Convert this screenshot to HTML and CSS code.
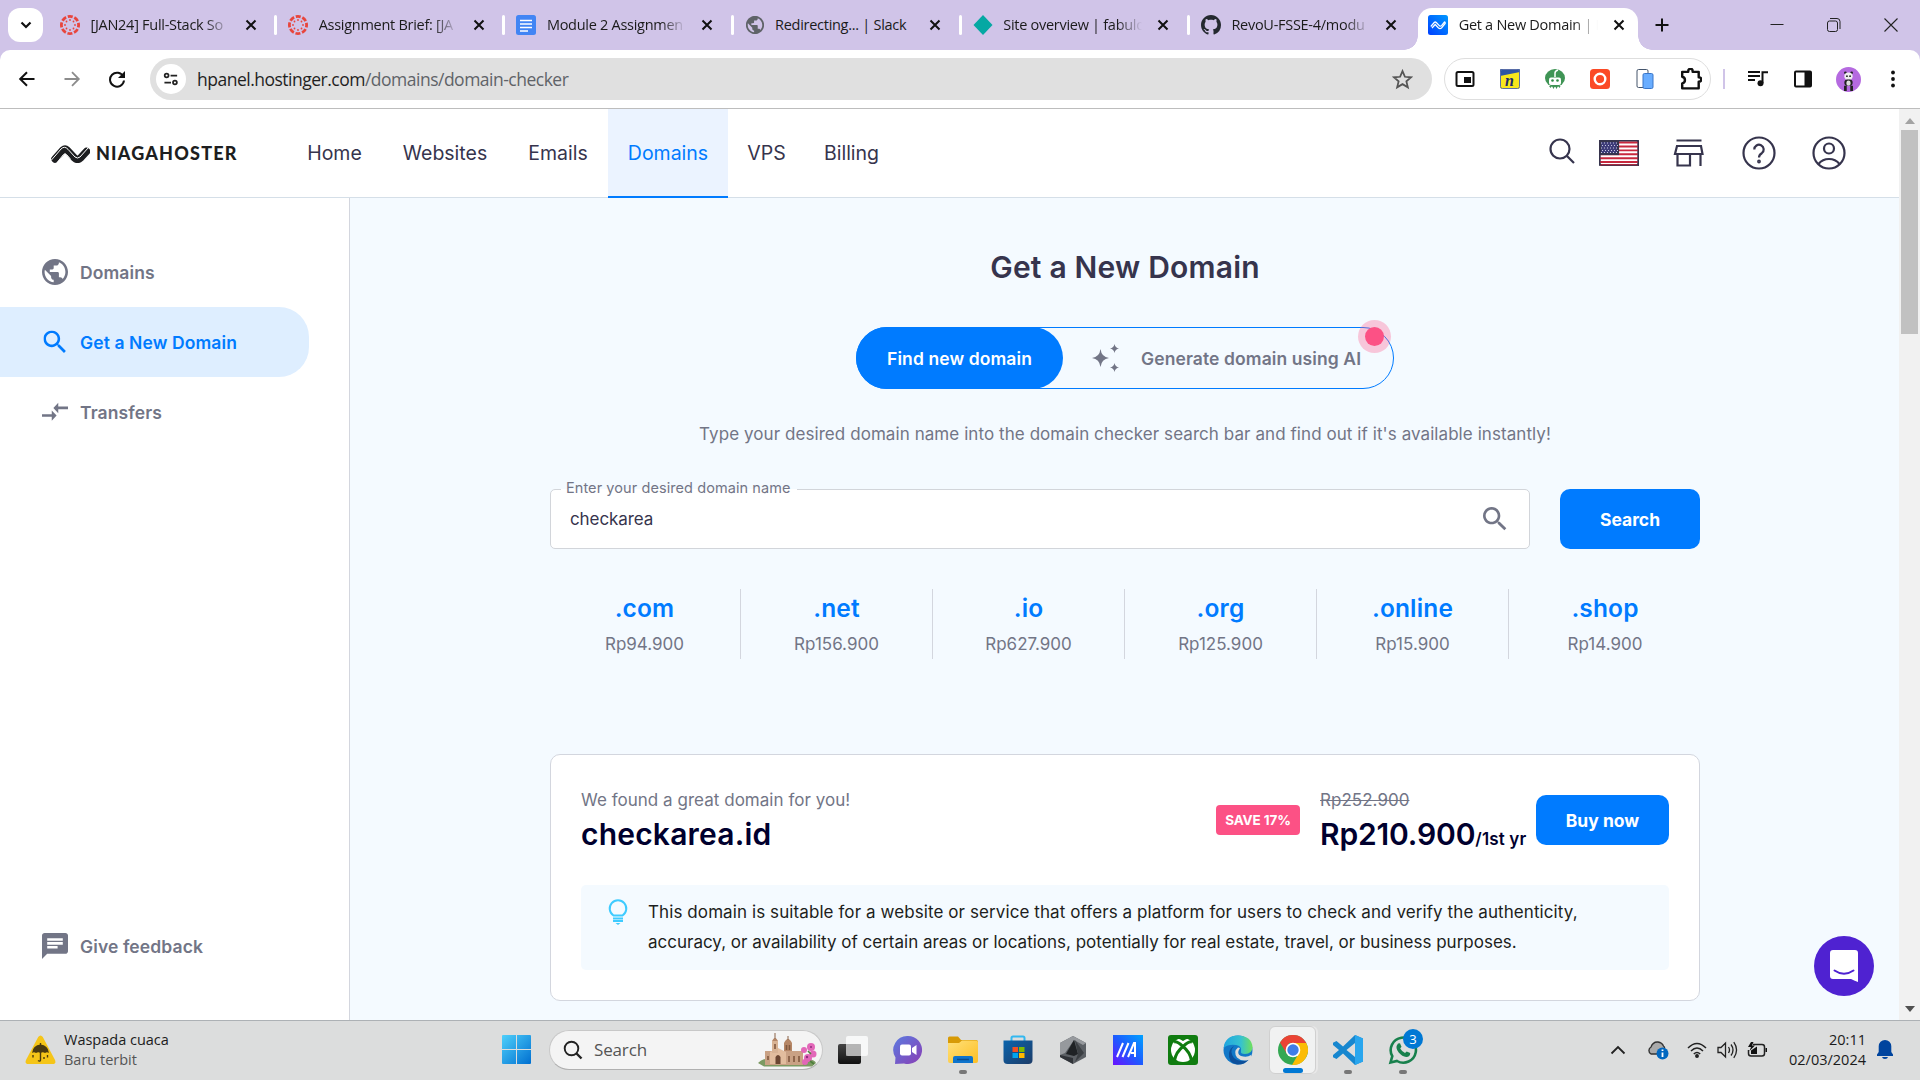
FILE: index.html
```html
<!DOCTYPE html>
<html lang="en">
<head>
<meta charset="utf-8">
<title>Get a New Domain | Niagahoster</title>
<link rel="stylesheet" href="styles.css">
</head>
<body>
<svg class="defs" width="0" height="0">
  <defs>
    <symbol id="close" viewBox="0 0 12 12"><path d="M1.5 1.5l9 9M10.5 1.5l-9 9" stroke="#111" stroke-width="2" fill="none"/></symbol>
    <symbol id="canvas" viewBox="0 0 20 20">
      <circle cx="10" cy="10" r="8.6" fill="none" stroke="#e8453c" stroke-width="2.8" stroke-dasharray="5 1.75" stroke-dashoffset="2.5"/>
      <g fill="#e8453c"><circle cx="10" cy="5" r=".9"/><circle cx="10" cy="15" r=".9"/><circle cx="5" cy="10" r=".9"/><circle cx="15" cy="10" r=".9"/><circle cx="6.5" cy="6.5" r=".9"/><circle cx="13.500" cy="6.5" r=".9"/><circle cx="6.500" cy="13.500" r=".9"/><circle cx="13.500" cy="13.500" r=".9"/></g>
    </symbol>
    <symbol id="globe" viewBox="2 2 20 20"><path d="M12 2C6.480 2 2 6.480 2 12s4.480 10 10 10 10-4.480 10-10S17.520 2 12 2zm-1 17.930c-3.950-.49-7-3.850-7-7.930 0-.62.080-1.210.210-1.790L9 15v1c0 1.100.9 2 2 2v1.930zm6.900-2.540c-.26-.81-1-1.390-1.900-1.390h-1v-3c0-.55-.45-1-1-1H8v-2h2c.55 0 1-.45 1-1V7h2c1.100 0 2-.9 2-2v-.41c2.930 1.190 5 4.060 5 7.410 0 2.080-.8 3.970-2.100 5.390z"/></symbol>
    <symbol id="search" viewBox="3 3 18 18"><path d="M15.500 14h-.79l-.28-.27C15.410 12.590 16 11.110 16 9.500 16 5.910 13.090 3 9.500 3S3 5.910 3 9.500 5.910 16 9.500 16c1.610 0 3.090-.59 4.230-1.570l.27.28v.79l5 4.990L20.490 19l-4.990-5zm-6 0C7.010 14 5 11.990 5 9.500S7.010 5 9.500 5 14 7.010 14 9.500 11.990 14 9.500 14z"/></symbol>
    <linearGradient id="winGrad" x1="0" y1="0" x2="1" y2="1"><stop offset="0" stop-color="#4fd0fb"/><stop offset="1" stop-color="#006fd0"/></linearGradient>
    <linearGradient id="favGrad" x1="1" y1="0" x2="0" y2="1"><stop offset="0" stop-color="#0099ff"/><stop offset="1" stop-color="#003fff"/></linearGradient>
    <linearGradient id="chatGrad" x1="0" y1="0" x2="1" y2="1"><stop offset="0" stop-color="#5b7be0"/><stop offset="1" stop-color="#8a3fb5"/></linearGradient>
    <linearGradient id="folderGrad" x1="0" y1="0" x2="1" y2="1"><stop offset="0" stop-color="#ffe07a"/><stop offset="1" stop-color="#fdbf24"/></linearGradient>
    <linearGradient id="storeGrad" x1="0" y1="0" x2="1" y2="1"><stop offset="0" stop-color="#0a64ad"/><stop offset="1" stop-color="#1d3c68"/></linearGradient>
    <linearGradient id="asusGrad" x1="1" y1="0" x2="0" y2="1"><stop offset="0" stop-color="#00a2ff"/><stop offset=".5" stop-color="#1d5bff"/><stop offset="1" stop-color="#6a11ff"/></linearGradient>
    <linearGradient id="edgeGrad" x1="0" y1="0" x2="1" y2="0"><stop offset="0" stop-color="#1fa5e0"/><stop offset=".6" stop-color="#36c2cf"/><stop offset="1" stop-color="#6fe05a"/></linearGradient>
    <linearGradient id="tvGrad" x1="0" y1="0" x2="0" y2="1"><stop offset="0" stop-color="#444"/><stop offset="1" stop-color="#111"/></linearGradient>
  </defs>
</svg>

<div class="screen">
  <header class="tabstrip">
    <button class="tab-search"><svg width="12" height="8" viewBox="0 0 12 8"><path d="M1.500 1.500L6 6l4.500-4.500" fill="none" stroke="#111" stroke-width="2.200"/></svg></button>
    <div class="tab"><svg class="fav"><use href="#canvas"/></svg><span class="tab-title fade">[JAN24] Full-Stack So</span><svg class="x"><use href="#close"/></svg></div>
    <div class="tab"><svg class="fav"><use href="#canvas"/></svg><span class="tab-title fade">Assignment Brief: [JA</span><svg class="x"><use href="#close"/></svg></div>
    <div class="tab"><svg class="fav" viewBox="0 0 20 20"><rect width="20" height="20" rx="2.500" fill="#4285f4"/><path d="M4 5.500h12M4 9h12M4 12.500h12M4 16h8" stroke="#fff" stroke-width="1.700"/></svg><span class="tab-title fade">Module 2 Assignmen</span><svg class="x"><use href="#close"/></svg></div>
    <div class="tab"><svg class="fav" fill="#5f6368" viewBox="-1 -1 22 22"><use href="#globe" width="20" height="20"/></svg><span class="tab-title">Redirecting... | Slack</span><svg class="x"><use href="#close"/></svg></div>
    <div class="tab"><svg class="fav" viewBox="0 0 20 20"><path d="M10 0l9.500 10-9.500 10L.5 10z" fill="#05a8a3"/></svg><span class="tab-title fade">Site overview | fabulo</span><svg class="x"><use href="#close"/></svg></div>
    <div class="tab nosep"><svg class="fav" viewBox="0 0 16 16"><path fill="#24292f" d="M8 0C3.580 0 0 3.580 0 8c0 3.540 2.290 6.530 5.470 7.590.4.070.55-.17.55-.38 0-.19-.01-.82-.01-1.490-2.010.37-2.530-.49-2.690-.94-.09-.23-.48-.94-.82-1.130-.28-.15-.68-.52-.01-.53.63-.01 1.080.58 1.230.82.72 1.210 1.870.87 2.330.66.070-.52.280-.87.510-1.070-1.780-.2-3.640-.89-3.640-3.950 0-.87.310-1.590.820-2.150-.08-.2-.36-1.020.080-2.120 0 0 .67-.21 2.200.820.640-.18 1.320-.27 2-.27s1.360.090 2 .270c1.530-1.040 2.200-.820 2.200-.820.440 1.100.160 1.920.080 2.120.510.560.820 1.270.820 2.150 0 3.070-1.870 3.750-3.650 3.950.290.250.540.730.540 1.480 0 1.070-.010 1.930-.010 2.200 0 .210.150.460.550.380A8.010 8.010 0 0 0 16 8c0-4.420-3.580-8-8-8z"/></svg><span class="tab-title fade">RevoU-FSSE-4/modu</span><svg class="x"><use href="#close"/></svg></div>
    <div class="tab active"><svg class="fav" viewBox="0 0 20 20"><rect width="20" height="20" rx="2.500" fill="url(#favGrad)"/><path d="M2.800 11.500l3.400-4q1-1 2.100 0l3.200 3.300q1 .8 2-.2l3-3.600M4 13l3.200-3.500L10.500 13q1.500 1.200 3 0l3.700-4.500q.2-1.800-1.200-1.700" fill="none" stroke="#fff" stroke-width="1.200"/></svg><span class="tab-title fade">Get a New Domain | I</span><svg class="x"><use href="#close"/></svg></div>
    <button class="new-tab"><svg width="14" height="14" viewBox="0 0 14 14"><path d="M7 .5v13M.5 7h13" stroke="#111" stroke-width="2"/></svg></button>
    <div class="winctl">
      <svg viewBox="0 0 16 16"><path d="M1.500 7.500h13" stroke="#222"/></svg>
      <svg viewBox="0 0 16 16" fill="none" stroke="#222"><rect x="1.500" y="4" width="10" height="10.500" rx="2"/><path d="M4 1.500h7a3 3 0 0 1 3 3V12"/></svg>
      <svg viewBox="0 0 16 16"><path d="M1.500 1.500l13 13M14.500 1.500l-13 13" stroke="#222" stroke-width="1.100"/></svg>
    </div>
  </header>

  <div class="toolbar">
    <div class="navbtns">
      <svg viewBox="0 0 18 18"><path d="M16.500 9H2.500M9 2.200L2.200 9 9 15.800" fill="none" stroke="#111" stroke-width="2"/></svg>
      <svg viewBox="0 0 18 18"><path d="M1.500 9h14M9 2.200L15.800 9 9 15.800" fill="none" stroke="#8c8c8c" stroke-width="1.800"/></svg>
      <svg viewBox="0 0 18 18"><path d="M15.300 6.500A7 7 0 1 0 16 10.500" fill="none" stroke="#111" stroke-width="2"/><path d="M17 1v7h-7z" fill="#111"/></svg>
    </div>
    <div class="omnibox">
      <span class="siteinfo"><svg width="16" height="14" viewBox="0 0 18 16" fill="none" stroke="#222" stroke-width="2"><circle cx="4" cy="4" r="2.200"/><path d="M8.500 4H16M1.500 12H9"/><circle cx="13.500" cy="12" r="2.200"/></svg></span>
      <span class="url">hpanel.hostinger.com<i>/domains/domain-checker</i></span>
      <svg class="star" viewBox="0 0 20 20"><path d="M10 2l2.300 5.400 5.900.5-4.500 3.900 1.400 5.700L10 14.400l-5.100 3.100 1.400-5.700L1.800 7.900l5.900-.5z" fill="none" stroke="#555" stroke-width="1.700"/></svg>
    </div>
    <div class="exts">
      <svg viewBox="0 0 20 20"><rect x="1.500" y="3" width="17" height="14" rx="1.500" fill="none" stroke="#111" stroke-width="2"/><rect x="9" y="8" width="7" height="6" fill="#111"/></svg>
      <svg viewBox="0 0 20 20"><rect width="20" height="20" rx="2" fill="#f8e71c"/><path d="M0 1q0-1 1-1h18q1 0 1 1v2L0 7z" fill="#2f55a4"/><rect x=".5" y=".5" width="19" height="19" rx="2" fill="none" stroke="#5a6ea8"/><text x="5" y="16.500" class="n-glyph">n</text></svg>
      <svg viewBox="0 0 20 20"><ellipse cx="10" cy="9" rx="10" ry="9" fill="#3f9455"/><path d="M4 17l1.500 2L7 17l1.500 3 1.500-3 1.500 3 1.500-3 1.500 2 1-2" fill="#3f9455"/><rect x="4" y="8.500" width="12" height="7.500" rx="2" fill="#fff"/><path d="M10 8V4q0-2 3-3" stroke="#fff" stroke-width="1.500" fill="none"/><circle cx="7.500" cy="11.500" r="1.300" fill="#2e8b45"/><circle cx="12.500" cy="11.500" r="1.300" fill="#2e8b45"/></svg>
      <svg viewBox="0 0 20 20"><rect width="20" height="20" rx="3.500" fill="#fb4a26"/><circle cx="10" cy="10" r="5.300" fill="none" stroke="#fff" stroke-width="2.400"/></svg>
      <svg viewBox="0 0 20 20"><rect x="2" y=".5" width="11" height="18" rx="1.500" fill="#fff" stroke="#44546b"/><rect x="8" y="4.500" width="10" height="15" rx="1.500" fill="#69adff" stroke="#3a76c9"/></svg>
      <svg class="puzzle" viewBox="0 0 20 20"><path d="M2 3.500h5.500v-.8a2 2 0 0 1 4 0v.8H17v5h.3a2 2 0 0 1 0 4H17V18.500H2V14q2.500-.5 2.500-3T2 8z" fill="none" stroke="#111" stroke-width="2.200" stroke-linejoin="round"/></svg>
    </div>
    <span class="tb-sep"></span>
    <div class="tbright">
      <svg viewBox="0 0 20 20"><path d="M0 3h12M0 7h12M0 11h7" stroke="#111" stroke-width="2"/><path d="M14.500 14V3.200H20" fill="none" stroke="#111" stroke-width="2"/><circle cx="12.500" cy="14.300" r="3" fill="#111"/></svg>
      <svg viewBox="0 0 20 20"><rect x="2" y="2.500" width="16" height="15" rx="1" fill="none" stroke="#111" stroke-width="2"/><path d="M11.500 2.500H18v15h-6.500z" fill="#111"/></svg>
      <svg class="avatar" viewBox="0 0 24 24"><circle cx="12" cy="12" r="12" fill="#b56ae0"/><circle cx="9" cy="5.500" r="1.300" fill="#222"/><circle cx="15" cy="5.500" r="1.300" fill="#222"/><ellipse cx="12" cy="8.800" rx="4" ry="3.500" fill="#eee"/><rect x="8" y="12" width="8" height="6" rx="3" fill="#222"/><rect x="10" y="13" width="4" height="5" rx="2" fill="#ddd"/><path d="M9 18v5M15 18v5" stroke="#222" stroke-width="2.600"/><circle cx="10.500" cy="8.800" r=".9" fill="#222"/><circle cx="13.500" cy="8.800" r=".9" fill="#222"/></svg>
      <svg viewBox="0 0 20 20" fill="#111"><circle cx="10" cy="3.500" r="1.900"/><circle cx="10" cy="10" r="1.900"/><circle cx="10" cy="16.500" r="1.900"/></svg>
    </div>
  </div>

  <div class="viewport">
    <div class="page">
      <div class="site-header">
        <div class="logo">
          <svg width="40" height="19" viewBox="0 0 40 19" fill="none" stroke-linejoin="round" stroke-linecap="round"><path d="M5 15L13 6q2-1.800 4 0l7.500 8q3 2.600 6 0L36.500 7.500" stroke="#1d1e20" stroke-width="7.500"/><path d="M1 16.500l4-4.500L11 5q3.500-3.500 7 .3L25 13q2.500 2 5 0L38.500 3.500M7.500 18l6-7.500q1.500-1.500 3 0l3.500 4M21 3.500l5 5.500 4-4.500" stroke="#fff" stroke-width="1"/></svg>
          <b>NIAGAHOSTER</b>
        </div>
        <nav class="mainnav">
          <a>Home</a><a>Websites</a><a>Emails</a><a class="on">Domains</a><a>VPS</a><a>Billing</a>
        </nav>
        <div class="head-icons">
          <svg class="hi-search" viewBox="0 0 26 26"><circle cx="11" cy="11" r="9.500"/><path d="M18 18l7 7"/></svg>
          <svg class="hi-flag" viewBox="0 0 40 26"><rect x=".5" y=".5" width="39" height="25" rx="2" fill="#fff"/><path d="M1 2.500h38M1 6.500h38M1 10.400h38M1 14.300h38M1 18.200h38M1 22h38M1 25h38" stroke="#c8283e" stroke-width="1.900"/><rect x="1" y="1" width="18" height="13" fill="#3f3d7a"/><path d="M2 3h17M3 5.500h17M2 8h17M3 10.500h17M2 12.500h17" stroke="#c9c9e0" stroke-width="1" stroke-dasharray="1 2"/><rect x=".75" y=".75" width="38.500" height="24.500" rx="2" stroke-width="1.200"/></svg>
          <svg class="hi-store" viewBox="0 0 30 28"><path d="M3 1.500h25M3.500 7h24l1.500 8H1.500zM4 15v11.500h12.500V15M27 15v12"/></svg>
          <svg class="hi-round" viewBox="0 0 34 34"><circle cx="17" cy="17" r="15.500"/><path d="M12.300 13.500a4.700 4.700 0 1 1 7.500 3.700q-2.800 1.800-2.800 4.300"/><circle cx="17" cy="25.500" r=".8"/></svg>
          <svg class="hi-round" viewBox="0 0 34 34"><circle cx="17" cy="17" r="15.500"/><circle cx="17" cy="12.500" r="5"/><path d="M6.500 28q4-5 10.500-5t10.500 5"/></svg>
        </div>
      </div>

      <div class="body-row">
        <aside class="sidebar">
          <a><svg fill="#727586"><use href="#globe"/></svg>Domains</a>
          <a class="on"><svg fill="#007bff" viewBox="-1.500 -1.500 27 27"><use href="#search" width="24" height="24"/></svg>Get a New Domain</a>
          <a><svg viewBox="0 0 24 24" fill="#727586"><path d="M9.010 14H0v2.400h9.010V20L13.500 15.200 9.010 10.500zM15 13.200V9.400h9V7H15V3.500L10.500 8.200z"/></svg>Transfers</a>
          <a class="feedback"><svg viewBox="2 2 20 20" fill="#727586"><path d="M20 2H4c-1.100 0-1.990.9-1.990 2L2 22l4-4h14c1.100 0 2-.9 2-2V4c0-1.100-.9-2-2-2zM6 9h12v2H6V9zm8 5H6v-2h8v2zm4-6H6V6h12v2z"/></svg>Give feedback</a>
        </aside>

        <main class="content">
          <h1>Get a New Domain</h1>
          <div class="toggle">
            <span class="t-on"><em>Find new domain</em></span>
            <span class="t-off">
              <svg width="28" height="28" viewBox="0 0 28 28" fill="#727586"><path d="M8.500 5q1 8 8.500 9-7.500 1-8.500 9-1-8-8.500-9 7.500-1 8.500-9zM22.500 0q.7 3.800 4.500 4.500-3.800.7-4.500 4.500-.7-3.800-4.500-4.500 3.800-.7 4.500-4.500zM22.500 19q.7 3.800 4.500 4.500-3.800.7-4.500 4.500-.7-3.800-4.500-4.500 3.800-.7 4.500-4.500z"/></svg>
              <em>Generate domain using AI</em>
            </span>
            <i class="pulse"></i>
          </div>
          <p class="lead"><span>Type your desired domain name into the domain checker search bar and find out if it's available instantly!</span></p>

          <div class="search-row">
            <div class="field">
              <label>Enter your desired domain name</label>
              <span>checkarea</span>
              <svg width="24" height="24" fill="#727586"><use href="#search"/></svg>
            </div>
            <button class="btn btn-search">Search</button>
          </div>

          <div class="tlds">
            <div><b>.com</b><span>Rp94.900</span></div>
            <div><b>.net</b><span>Rp156.900</span></div>
            <div><b>.io</b><span>Rp627.900</span></div>
            <div><b>.org</b><span>Rp125.900</span></div>
            <div><b>.online</b><span>Rp15.900</span></div>
            <div><b>.shop</b><span>Rp14.900</span></div>
          </div>

          <section class="card">
            <div class="card-top">
              <div class="found"><span class="muted">We found a great domain for you!</span><strong>checkarea.id</strong></div>
              <span class="save">SAVE 17%</span>
              <div class="price"><s class="muted">Rp252.900</s><strong>Rp210.900<small>/1st yr</small></strong></div>
              <button class="btn btn-buy">Buy now</button>
            </div>
            <div class="tip">
              <svg width="20" height="26" viewBox="0 0 20 26"><path d="M5.500 16.500a8.300 8.300 0 1 1 9 0z" fill="none" stroke="#3ecbff" stroke-width="2"/><path d="M5 19.500h10M5 22h10" stroke="#3ecbff" stroke-width="2"/><path d="M7.500 24h5L10 26z" fill="#3ecbff"/></svg>
              <p><span class="wide">This domain is suitable for a website or service that offers a platform for users to check and verify the authenticity,</span><br><span>accuracy, or availability of certain areas or locations, potentially for real estate, travel, or business purposes.</span></p>
            </div>
          </section>
        </main>
      </div>
      <div class="chat"><svg width="28" height="32" viewBox="0 0 28 32"><path d="M3 0h22a3 3 0 0 1 3 3v29q-3-1-7-3H3a3 3 0 0 1-3-3V3a3 3 0 0 1 3-3z" fill="#fff"/><path d="M4.500 20.500q9.500 6.500 19 0" fill="none" stroke="#4f22d1" stroke-width="2" stroke-linecap="round"/></svg></div>
    </div>
    <div class="scrollbar">
      <svg width="10" height="6" viewBox="0 0 10 6"><path d="M5 0l5 6H0z" fill="#a3a3a3"/></svg>
      <i class="thumb"></i>
      <svg class="down" width="10" height="6" viewBox="0 0 10 6"><path d="M0 0h10L5 6z" fill="#505050"/></svg>
    </div>
  </div>

  <footer class="taskbar">
    <div class="weather">
      <svg width="31" height="30" viewBox="0 0 31 30"><path d="M13.200 2Q15.500-1 17.800 2L30 25q1.500 4-2.500 4h-24Q-.5 29 1 25z" fill="#f5c518"/><path d="M7 18q1-8 8.500-8.500Q23 10 24 18q-2-1.500-4 0-2.200-1.500-4.500 0-2.200-1.500-4.500 0-2-1.500-4 0z" fill="#4a3a10"/><path d="M15.500 8v17q-.5 2-2.500.500M8 20v2.500M22.500 20v2.500M19 22v2" fill="none" stroke="#4a3a10" stroke-width="1.400"/></svg>
      <div><span>Waspada cuaca</span><span class="w2">Baru terbit</span></div>
    </div>
    <div class="apps">
      <svg class="win" viewBox="0 0 29 29" fill="url(#winGrad)"><path d="M1 0h13v14H0V1q0-1 1-1zM15 0h13q1 0 1 1v13H15zM0 15h14v14H1q-1 0-1-1zM15 15h14v13q0 1-1 1H15z"/></svg>
      <div class="tsearch">
        <svg width="20" height="20" viewBox="0 0 20 20"><circle cx="8.500" cy="8.500" r="6.800" fill="none" stroke="#222" stroke-width="1.900"/><path d="M13.500 13.500l5 5" stroke="#222" stroke-width="2.400"/></svg>
        <span>Search</span>
        <svg class="church" width="60" height="34" viewBox="0 0 60 34"><path d="M0 30q6-6 12-3h34q10-2 12 3l-4 3.500H6z" fill="#7c9a63"/><rect x="7" y="18" width="38" height="14" fill="#c9a184"/><path d="M12 31V19l8-4 8 4v12z" fill="#e2bd9e"/><rect x="14" y="8" width="6" height="12" fill="#d8b394"/><path d="M14 8q3-6 6 0zM26 18v-8q4-8 8 0v8z" fill="#b58666"/><path d="M17 0v6M30 3v4" stroke="#8a6248"/><path d="M17.500 31v-7q2.500-4 5 0v7z" fill="#6b4632"/><path d="M17 11v5M28.500 12v5M31.500 12v5M10 23v4M31 23v6M36 23v6M41 23v6" stroke="#80583f" stroke-width="1.600"/><g fill="#e267b8"><circle cx="46" cy="17" r="3"/><circle cx="53" cy="14" r="4"/><circle cx="55" cy="21" r="3.500"/><circle cx="50" cy="25" r="4"/><circle cx="47" cy="29" r="3"/></g><g fill="#8b2f7c"><circle cx="53" cy="14" r="1"/><circle cx="49" cy="24" r="1.200"/></g><path d="M50 18l3 3M52 28l4 3" stroke="#4e7f3c" stroke-width="1.600"/></svg>
      </div>
      <div class="app"><svg viewBox="0 0 30 30"><rect x="0" y="9" width="23" height="20" rx="2" fill="url(#tvGrad)"/><rect x="8" y="1" width="22" height="20" rx="2" fill="#fff" opacity=".78"/><path d="M8 9h15v12H8z" fill="#a0a0a0" opacity=".6"/></svg></div>
      <div class="app"><svg viewBox="0 0 30 30"><path d="M15 1a14 14 0 1 1-4 27.400L2 29l.5-6.500A14 14 0 0 1 15 1z" fill="url(#chatGrad)"/><rect x="7" y="9.500" width="11" height="11" rx="2" fill="#fff"/><path d="M19 13l4.500-3v10L19 17z" fill="#fff"/></svg></div>
      <div class="app dot"><svg viewBox="0 0 30 30"><path d="M0 3q0-1.500 1.500-1.500H10L13 5h15q2 0 2 2v3H0z" fill="#d79a06"/><path d="M0 8h11l3-2.500h14q2 0 2 2V26q0 2-2 2H2q-2 0-2-2z" fill="url(#folderGrad)"/><path d="M5 28v-5q0-2 2-2h16q2 0 2 2v5z" fill="#0f74cc"/><path d="M9 24.500h12" stroke="#0a4d8f" stroke-width="1.500"/></svg></div>
      <div class="app"><svg viewBox="0 0 30 30"><path d="M8.500 6V3q0-1.500 1.500-1.500h10q1.500 0 1.500 1.500v3" fill="none" stroke="#32b8f0" stroke-width="2"/><path d="M.5 5.500h29V25q0 4-4 4h-21q-4 0-4-4z" fill="url(#storeGrad)"/><path d="M9.500 12H15v5H9.500z" fill="#f25022"/><path d="M16 12h5.500v5H16z" fill="#7fba00"/><path d="M9.500 18H15v5H9.500z" fill="#00a4ef"/><path d="M16 18h5.500v5H16z" fill="#ffb900"/></svg></div>
      <div class="app"><svg viewBox="0 0 30 30"><path d="M15 1l13 7v14l-13 7-13-7V8z" fill="#5c6065"/><path d="M15 1l13 7-3 2-9-5-9 13-5 2V8z" fill="#96999d"/><path d="M16 5L8 19l8 2 4-2z" fill="#1f2225"/><path d="M17 5l9 13-9 9 3-8z" fill="#3b3f43"/><path d="M2 20l13 3v6L2 22z" fill="#303338"/></svg></div>
      <div class="app"><svg viewBox="0 0 30 30"><rect width="30" height="30" fill="url(#asusGrad)"/><path d="M4 22L10 8M9.500 22l6-14M15 22l6-14h1v14M18 18h4" fill="none" stroke="#fff" stroke-width="2"/></svg></div>
      <div class="app"><svg viewBox="0 0 30 30"><rect width="30" height="30" rx="3" fill="#107c10"/><circle cx="15" cy="15" r="12" fill="#fff"/><path d="M6.500 25.500Q8 17 15 11.500 22 17 23.500 25.500M6 7q3-1 9 4.500Q21 6 24 7" fill="none" stroke="#107c10" stroke-width="3"/><path d="M9 3.500q3 0 6 2.500 3-2.500 6-2.500L15 1z" fill="#107c10"/></svg></div>
      <div class="app"><svg viewBox="0 0 30 30"><circle cx="15" cy="15" r="14.500" fill="#1278c8"/><path d="M.7 13Q2 .5 15 .5 29 1 29.500 12.500 29 19 22 19q-5 0-4-3 1-5-5-6Q5 9 .7 13z" fill="url(#edgeGrad)"/><path d="M11 11q-5 5 0 12 6 5.500 15 1-4 6-12 5.500Q5 28 6 18q1-5 5-7z" fill="#0c4f9b"/><path d="M17 13q-4 6 1 8 6 2 10-1l1 4-3.500 1q-7 2-11.500-2.500-4-6 1-10z" fill="#dcdcdc"/></svg></div>
      <div class="app chrome"><svg viewBox="0 0 30 30"><circle cx="15" cy="15" r="15" fill="#34a853"/><path d="M15 8h13.200A15 15 0 0 1 14 30l7-12z" fill="#fbbc05"/><path d="M2 7.500L9 19l2-11h17.300L28 7.500A15 15 0 0 0 2 7.500z" fill="#ea4335"/><circle cx="15" cy="15" r="7.300" fill="#fff"/><circle cx="15" cy="15" r="5.700" fill="#3f7de8"/></svg></div>
      <div class="app dot"><svg viewBox="0 0 30 30"><path d="M22 0l8 3.500v23L22 30 10 18.500 3.500 24 0 22.300V20l6-5-6-5V7.700L3.500 6 10 11.500zM22 8l-8.500 7 8.500 7z" fill="#1787cf"/><path d="M22 0l8 3.500v23L22 30z" fill="#29a6ee"/></svg></div>
      <div class="app dot"><svg viewBox="0 0 30 30"><path d="M2.500 27.500l1.800-6.300A12.600 12.600 0 1 1 9 26z" fill="none" stroke="#17804c" stroke-width="2.600"/><path d="M10 8.500l2-.3 1.500 3.500-1.300 1.800q1.700 3 4.800 4.500l1.700-1.600 3.500 1.600q0 4-4 4-4-.5-7.500-4.500-4-5-.7-9z" fill="#17804c"/></svg><i class="count">3</i></div>
    </div>
    <div class="tray">
      <svg width="16" height="10" viewBox="0 0 16 10"><path d="M1.500 8.500L8 2l6.500 6.500" fill="none" stroke="#222" stroke-width="1.800"/></svg>
      <svg class="t-cloud" width="22" height="20" viewBox="0 0 22 20"><path d="M4 14a4 4 0 0 1 0-7Q6 1.500 11 2q4 .5 5.500 4 1.500 1 1 3l-8 5z" fill="#aaa" stroke="#333" stroke-width="1.400"/><circle cx="15.500" cy="13.500" r="6" fill="#0067c0"/><path d="M15.500 12.500V17M15.500 9.500V11" stroke="#fff" stroke-width="1.800"/></svg>
      <svg class="t-wifi" width="20" height="16" viewBox="0 0 20 16" fill="none" stroke="#222" stroke-width="1.500"><path d="M1 6q9-9 18 0M4 9q6-6 12 0M6.800 12q3.200-3 6.400 0"/><circle cx="10" cy="14" r="1.200" fill="#222"/></svg>
      <svg class="t-vol" width="21" height="18" viewBox="0 0 21 18" fill="none" stroke="#222" stroke-width="1.300"><path d="M1 6.500h3L8.500 2v14L4 11.500H1zM11.500 6q2 3 0 6M14 3.500q4 5.500 0 11M16.800 1.200q5.500 7.800 0 15.600"/></svg>
      <svg class="t-bat" width="21" height="16" viewBox="0 0 21 16"><path d="M6 2.500h9q2.500 0 2.500 2.500v6.500q0 2.500-2.500 2.500H4q-2.500 0-2.500-2.500V8" fill="none" stroke="#222" stroke-width="1.500"/><path d="M4 12V8.500l6-4V12zM18.500 6H20v4h-1.500z" fill="#111"/><path d="M4 0L1 5h3L2.500 9 8 3.500H5L6.500 0z" fill="#111"/></svg>
      <div class="clock"><span>20:11</span><span>02/03/2024</span></div>
      <svg class="bell" width="16" height="19" viewBox="0 0 16 19" fill="#00449e"><path d="M8 0a6.300 6.300 0 0 1 6.300 6.300V12L16 14.500V16H0v-1.500L1.700 12V6.300A6.300 6.300 0 0 1 8 0zM5 17h6q-.5 2-3 2t-3-2z"/></svg>
    </div>
  </footer>
</div>
</body>
</html>
```
FILE: styles.css
```css
* { box-sizing: border-box; }
body { margin: 0; font-family: Inter, "Liberation Sans", sans-serif; overflow: hidden; }
button { border: 0; padding: 0; font: inherit; }
svg { flex: none; display: block; }
i, em { font-style: normal; }
.defs { position: absolute; }
.screen { width: 1920px; height: 1080px; display: flex; flex-direction: column; background: #d0c4e8; }

/* browser tabs */
.tabstrip { height: 50px; display: flex; align-items: center; padding-left: 8px; font-family: "Open Sans", "Noto Sans", sans-serif; }
.tab-search { width: 35px; height: 34px; border-radius: 12px; background: #fff; display: grid; place-items: center; margin-right: 4px; }
.tab { width: 228.2px; height: 42px; margin-top: 8px; padding: 0 0 8px 13px; display: flex; align-items: center; position: relative; }
.tab::after { content: ""; position: absolute; right: -2px; top: 7px; width: 3px; height: 20px; border-radius: 2px; background: #fff; }
.tab.nosep::after, .tab.active::after { display: none; }
.tab .fav { width: 20px; height: 20px; margin-right: 10.500px; }
.tab-title { width: 139px; height: 24px; line-height: 24px; white-space: nowrap; font-size: 14.500px; letter-spacing: -.28px; color: #1b1b1b; }
.fade { -webkit-mask-image: linear-gradient(90deg, #000 82%, transparent); mask-image: linear-gradient(90deg, #000 82%, transparent); }
.tab .x { width: 12px; height: 12px; margin-left: 15px; }
.tab.active { width: 220px; margin-left: 2px; background: #fff; border-radius: 14px 14px 0 0; padding-left: 10px; }
.tab.active::before { content: ""; position: absolute; left: -14px; right: -14px; bottom: 0; height: 14px;
  background: radial-gradient(circle at 0 0, transparent 13.500px, #fff 14px) left / 14px 14px no-repeat, radial-gradient(circle at 100% 0, transparent 13.500px, #fff 14px) right / 14px 14px no-repeat; }
.new-tab { width: 14px; height: 14px; background: none; margin-left: 17px; }
.winctl { margin-left: auto; margin-right: 21px; display: flex; gap: 41px; }
.winctl svg { width: 16px; height: 16px; }

/* browser toolbar */
.toolbar { height: 59px; background: #fff; border-bottom: 1px solid #bdbdbd; border-radius: 10px 10px 0 0; display: flex; align-items: center; }
.navbtns { width: 150px; padding-left: 18px; display: flex; gap: 27px; }
.navbtns svg { width: 18px; height: 18px; }
.omnibox { width: 1282px; height: 42px; border-radius: 21px; background: #e0e0e0; display: flex; align-items: center; padding: 0 19px 0 6px; }
.siteinfo { width: 30px; height: 30px; border-radius: 50%; background: #fff; display: grid; place-items: center; }
.url { margin-left: 11px; font: 17.500px "Open Sans", "Noto Sans", sans-serif; letter-spacing: -.5px; color: #1f1f1f; }
.url i { color: #5f6368; }
.star { width: 21px; height: 21px; margin-left: auto; }
.exts { width: 267px; height: 42px; margin-left: 12px; border: 1px solid #dedede; border-radius: 21px; display: flex; align-items: center; gap: 25px; padding-left: 10px; }
.exts svg { width: 20px; height: 20px; }
.exts .puzzle { width: 22px; height: 22px; }
.n-glyph { font: italic bold 16px "Liberation Serif", serif; fill: #1c2a6b; }
.tb-sep { width: 2px; height: 20px; background: #d0c4e8; margin-left: 12px; }
.tbright { display: flex; align-items: center; gap: 25px; margin-left: 23px; }
.tbright svg { width: 20px; height: 20px; }
.tbright .avatar { width: 25px; height: 25px; margin: 0 -2.500px; }

/* page area */
.viewport { height: 911px; display: flex; background: #fff; }
.page { width: 1899px; display: flex; flex-direction: column; position: relative; }
.scrollbar { width: 21px; background: #f1f1f1; display: flex; flex-direction: column; align-items: center; padding-top: 9px; }
.thumb { width: 17px; height: 204px; margin-top: 6px; background: #c1c1c1; }
.scrollbar .down { margin-top: auto; margin-bottom: 8px; }
.site-header { height: 89px; border-bottom: 1px solid #d5dfe8; display: flex; }
.logo { width: 287px; padding-left: 50px; display: flex; align-items: center; gap: 6px; }
.logo b { font: 900 18px Lato, sans-serif; letter-spacing: 1.200px; color: #1d1e20; }
.mainnav { display: grid; grid-template-columns: 95px 126px 100px 120px 77px 93px; font-size: 19.500px; color: #36344d; }
.mainnav a { display: flex; align-items: center; justify-content: center; height: 88px; }
.mainnav .on { height: 89px; background: #ebf3ff; color: #007bff; border-bottom: 2px solid #007bff; }
.head-icons { margin-left: auto; width: 350px; display: flex; align-items: center; }
.head-icons svg { fill: none; stroke: #36344d; stroke-width: 2.200; }
.hi-search { width: 26px; height: 26px; margin-bottom: 4px; }
.hi-flag { width: 40px; height: 26px; margin-left: 24px; }
.hi-store { width: 31px; height: 28px; margin-left: 34px; }
.hi-round { width: 34px; height: 34px; margin-left: 36px; }
.hi-store + .hi-round { margin-left: 38px; }
.body-row { height: 822px; display: flex; }

/* sidebar */
.sidebar { width: 350px; border-right: 1px solid #d3d6de; padding-top: 39px; display: flex; flex-direction: column; }
.sidebar a { width: 309px; height: 70px; display: flex; align-items: center; padding-left: 42px; font-size: 17.500px; letter-spacing: .1px; font-weight: 600; color: #727586; }
.sidebar svg { width: 26px; height: 26px; margin-right: 12px; }
.sidebar .on { background: #deeeff; border-radius: 0 30px 30px 0; color: #007bff; }
.sidebar .feedback { margin-top: auto; margin-bottom: 39px; }

/* main content */
.content { width: 1549px; background: #f4faff; padding: 0 199px 0 200px; display: flex; flex-direction: column; }
h1 { margin: 45px 0 0; height: 48px; line-height: 48px; font-size: 30px; letter-spacing: .2px; font-weight: 600; text-align: center; color: #36344d; }
.toggle { position: relative; width: 538px; height: 62px; margin: 36px auto 0; border: 1px solid #007bff; border-radius: 31px; display: flex; font-size: 17.500px; letter-spacing: .1px; font-weight: 600; color: #727586; }
.t-on { width: 207px; margin: -1px; border-radius: 31px; background: #007bff; color: #fff; display: grid; place-items: center; }
.t-off { display: flex; align-items: center; padding-left: 30px; gap: 21px; white-space: nowrap; }
.pulse { position: absolute; right: 2px; top: -8px; width: 33px; height: 33px; border-radius: 50%; background: #ff4f854d; display: grid; place-items: center; }
.pulse::after { content: ""; width: 19px; height: 19px; border-radius: 50%; background: #fc5185; }
.lead { margin: 30px 0 0; height: 30px; line-height: 30px; text-align: center; font-size: 17px; letter-spacing: .07px; color: #727586; white-space: nowrap; }
.search-row { margin-top: 40px; display: flex; gap: 30px; }
.field { position: relative; width: 980px; height: 60px; background: #fff; border: 1px solid #d2d5da; border-radius: 5px; display: flex; align-items: center; justify-content: space-between; padding: 0 22px 0 19px; font-size: 17px; letter-spacing: -.1px; color: #36344d; }
.field label { position: absolute; left: 10px; top: -14px; width: 236px; padding-left: 5px; height: 24px; line-height: 24px; font-size: 14.500px; letter-spacing: .08px; color: #727586; background: linear-gradient(#f4faff 13px, #fff 13px); white-space: nowrap; }
.btn { background: #007bff; color: #fff; border-radius: 10px; font-size: 17.500px; font-weight: 700; }
.btn-search { width: 140px; height: 60px; }
.tlds { margin: 40px 0 0 -1px; display: grid; grid-template-columns: repeat(6, 192px); }
.tlds div { height: 70px; border-right: 1px solid #d3d6de; text-align: center; }
.tlds div:last-child { border: 0; }
.tlds b { display: block; height: 39px; line-height: 39px; font-size: 24.500px; letter-spacing: .15px; font-weight: 600; color: #007bff; }
.tlds span { display: block; height: 31px; line-height: 33px; font-size: 17px; color: #727586; }
.card { margin-top: 95px; width: 1150px; height: 247px; background: #fff; border: 1px solid #d3d6de; border-radius: 10px; padding: 30px; }
.card-top { height: 70px; display: flex; align-items: center; }
.muted { font-size: 17px; letter-spacing: .03px; color: #727586; }
.found, .price { display: flex; flex-direction: column; height: 70px; line-height: 31px; white-space: nowrap; }
.found strong, .price strong { line-height: 37px; font-size: 30px; font-weight: 600; color: #00002e; }
.found strong { letter-spacing: .2px; }
.price strong { letter-spacing: -.15px; }
.found { width: 635px; }
.price { width: 216px; }
.price small { font-size: 17px; letter-spacing: .15px; }
.save { width: 84px; height: 30px; line-height: 30px; text-align: center; border-radius: 4px; margin-right: 20px; background: #fc5185; color: #fff; font-size: 13.500px; letter-spacing: -.1px; font-weight: 700; white-space: nowrap; }
.btn-buy { width: 133px; height: 50px; }
.tip { height: 85px; margin-top: 30px; border-radius: 5px; background: #f4faff; padding: 12px 0 0 27px; display: flex; }
.tip svg { margin-top: 2px; }
.tip p { margin: 0 0 0 20px; line-height: 30px; font-size: 17px; color: #1d1e20; white-space: nowrap; }
.tip .wide { letter-spacing: .09px; }
.chat { position: absolute; left: 1814px; top: 827px; width: 60px; height: 60px; border-radius: 50%; background: #4f22d1; display: grid; place-items: center; }

/* taskbar */
.taskbar { height: 60px; padding-bottom: 2px; border-top: 1px solid #adb1b5; background: #dcdddd; display: flex; align-items: center; font-family: "Open Sans", "Noto Sans", sans-serif; font-size: 14.500px; color: #1b1b1b; }
.weather { width: 502px; padding-left: 25px; display: flex; align-items: center; gap: 8px; }
.weather div { display: flex; flex-direction: column; line-height: 20px; }
.w2 { color: #555; }
.apps { display: flex; align-items: center; }
.win { width: 29px; height: 29px; }
.tsearch { width: 274px; height: 40px; margin: 0 2px 0 18px; border-radius: 20px; background: #f4f4f4; border: 1px solid #c8c8c8; border-bottom-color: #b0b0b0; display: flex; align-items: center; padding: 0 4px 0 13px; font-size: 17px; letter-spacing: -.15px; color: #555; }
.tsearch span { margin-left: 11px; }
.church { margin-left: auto; }
.app { position: relative; width: 55px; height: 48px; display: grid; place-items: center; }
.app svg { width: 30px; height: 30px; }
.app.dot::after { content: ""; position: absolute; bottom: 0; left: 24px; width: 8px; height: 4px; border-radius: 2px; background: #777; }
.app.chrome { width: 47px; margin: 0 4px; background: #f1f2f2; border: 1px solid #d0d0d0; border-radius: 6px; box-shadow: 2px 0 0 #e8e8e8; }
.app.chrome::after { content: ""; position: absolute; bottom: 0; left: 13px; width: 20px; height: 5px; border-radius: 3px; background: #0078d4; }
.count { position: absolute; left: 28px; top: 3px; width: 20px; height: 20px; border-radius: 50%; background: #0078d4; color: #fff; font-size: 13px; line-height: 20px; text-align: center; }
.tray { margin-left: auto; width: 310px; display: flex; align-items: center; }
.t-cloud { margin-left: 21px; }
.t-wifi { margin-left: 18px; }
.t-vol { margin-left: 10px; }
.t-bat { margin-left: 9px; }
.clock { width: 98px; display: flex; flex-direction: column; text-align: right; line-height: 20px; }
.bell { margin-left: 11px; }
```
